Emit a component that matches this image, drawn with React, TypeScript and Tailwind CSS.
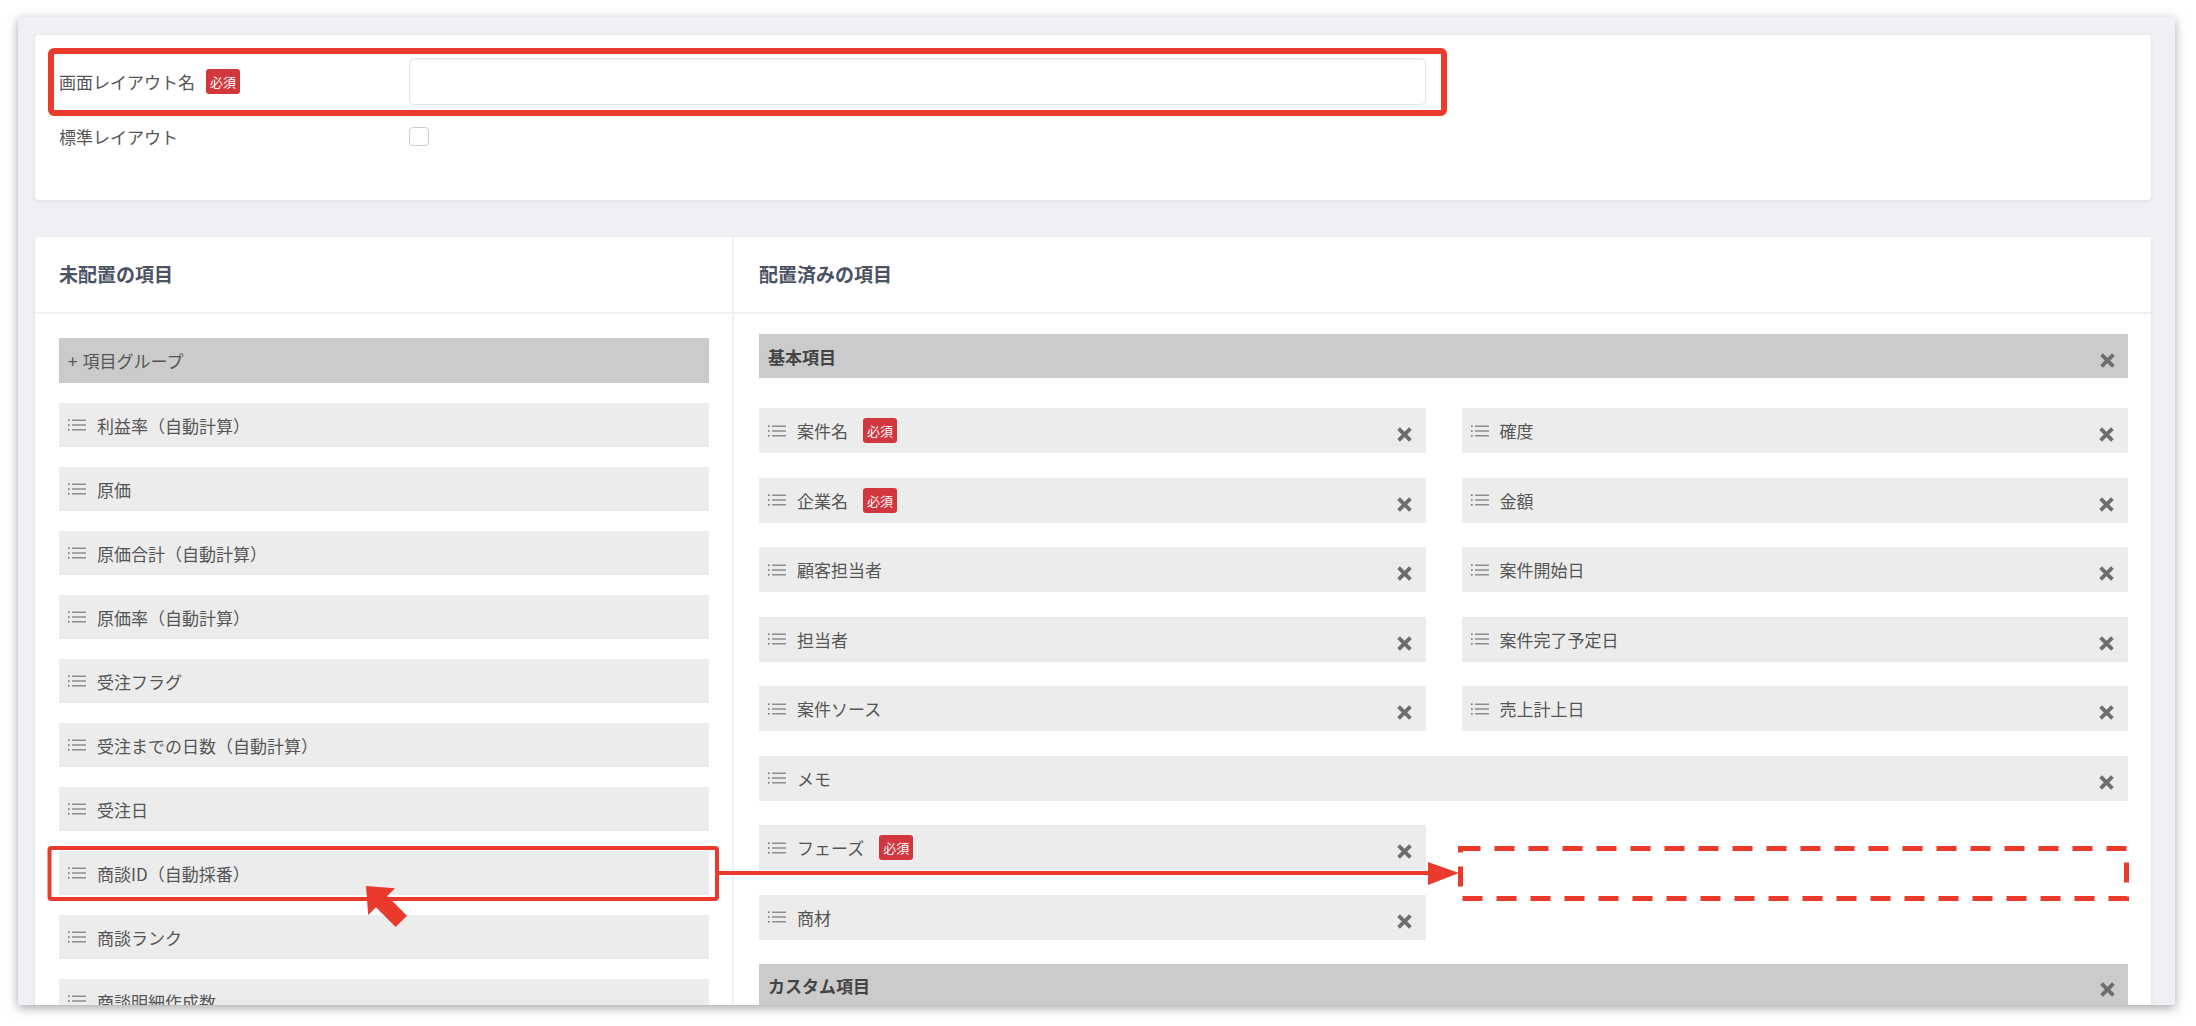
import React from "react"

const RED = "#ea3a2b"

function ListIcon() {
  return (
    <svg width="18" height="12" viewBox="0 0 18 12" className="shrink-0">
      <g fill="#777">
        <rect x="0" y="0.4" width="1.6" height="1.6" />
        <rect x="0" y="5.2" width="1.6" height="1.6" />
        <rect x="0" y="10" width="1.6" height="1.6" />
      </g>
      <g stroke="#777" strokeWidth="1.2">
        <line x1="4" y1="1.2" x2="18" y2="1.2" />
        <line x1="4" y1="6" x2="18" y2="6" />
        <line x1="4" y1="10.8" x2="18" y2="10.8" />
      </g>
    </svg>
  )
}

function XIcon({ className = "" }: { className?: string }) {
  return (
    <svg width="15" height="15" viewBox="0 0 15 15" className={"shrink-0 " + className}>
      <g stroke="#6e6e6e" strokeWidth="3.8" strokeLinecap="butt">
        <line x1="1.6" y1="1.6" x2="13.4" y2="13.4" />
        <line x1="13.4" y1="1.6" x2="1.6" y2="13.4" />
      </g>
    </svg>
  )
}

function Required() {
  return (
    <span className="inline-flex items-center justify-center h-[25px] w-[34px] rounded-[3px] bg-[#d2373d] text-white text-[13px] leading-none">
      必須
    </span>
  )
}

function Item({ label, req, removable = true, h = "h-[45px]" }: { label: string; req?: boolean; removable?: boolean; h?: string }) {
  return (
    <div className={h + " bg-[#ececec] flex items-center pl-[9px] pr-[14px]"}>
      <ListIcon />
      <span className="ml-[11px] text-[17px] text-[#555] leading-none">{label}</span>
      {req && (
        <span className="ml-[15px] flex">
          <Required />
        </span>
      )}
      {removable && <XIcon className="ml-auto mt-[8px]" />}
    </div>
  )
}

function GroupBar({ label }: { label: string }) {
  return (
    <div className="h-[44px] bg-[#cbcbcb] flex items-center pl-[9px] pr-[13px]">
      <span className="text-[17px] font-bold text-[#444] leading-none">{label}</span>
      <XIcon className="ml-auto mt-[8px]" />
    </div>
  )
}

const unplaced = [
  "利益率（自動計算）",
  "原価",
  "原価合計（自動計算）",
  "原価率（自動計算）",
  "受注フラグ",
  "受注までの日数（自動計算）",
  "受注日",
  "商談ID（自動採番）",
  "商談ランク",
  "商談明細作成数",
]

export default function App() {
  return (
    <div className="relative w-[2196px] h-[1026px] bg-white overflow-hidden pt-[17px] pl-[18px] pr-[21px] pb-[21px] [font-family:'Noto_Sans_CJK_JP','Noto_Sans',sans-serif]">
      <div className="h-full bg-[#eff0f3] overflow-hidden pt-[18px] pl-[17px] pr-[24px] shadow-[0_3px_10px_rgba(0,0,0,0.35)]">
        {/* layout name card */}
        <div className="h-[165px] bg-white rounded-[4px] shadow-[0_1px_4px_rgba(0,0,0,0.08)] pt-[23px] pl-[24px]">
          <div className="flex items-center h-[47px]">
            <div className="w-[350px] flex items-center">
              <span className="text-[17px] text-[#555] leading-none">画面レイアウト名</span>
              <span className="ml-[11px] flex">
                <Required />
              </span>
            </div>
            <div className="w-[1017px] h-[47px] rounded-[5px] border border-[#e2e4e8] bg-white shadow-[inset_0_1px_2px_rgba(0,0,0,0.05)]" />
          </div>
          <div className="flex items-center h-[30px] mt-[16px]">
            <span className="w-[350px] text-[17px] text-[#555] leading-none">標準レイアウト</span>
            <div className="w-[20px] h-[19px] rounded-[4px] border border-[#c9ccd1] bg-white" />
          </div>
        </div>

        {/* items card */}
        <div className="mt-[37px] bg-white rounded-t-[4px] shadow-[0_1px_4px_rgba(0,0,0,0.08)] flex">
          <div className="w-[699px] border-r-2 border-[#eef0f2]">
            <div className="h-[77px] border-b-2 border-[#eef0f2] flex items-center pl-[24px]">
              <span className="text-[19px] font-bold text-[#4a5263]">未配置の項目</span>
            </div>
            <div className="pt-[24px] pl-[24px] pr-[23px] flex flex-col gap-[20px] pb-[40px]">
              <div className="h-[45px] bg-[#cbcbcb] flex items-center pl-[9px]">
                <span className="text-[17px] text-[#555] leading-none mr-[5px]">+</span>
                <span className="text-[17px] text-[#555] leading-none">項目グループ</span>
              </div>
              {unplaced.map((l) => (
                <Item key={l} label={l} removable={false} h="h-[44px]" />
              ))}
            </div>
          </div>
          <div className="flex-1">
            <div className="h-[77px] border-b-2 border-[#eef0f2] flex items-center pl-[25px]">
              <span className="text-[19px] font-bold text-[#4a5263]">配置済みの項目</span>
            </div>
            <div className="pt-[20px] pl-[25px] pr-[23px] pb-[40px]">
              <GroupBar label="基本項目" />
              <div className="grid grid-cols-2 gap-x-[36px] gap-y-[24.5px] mt-[30px]">
                <Item label="案件名" req />
                <Item label="確度" />
                <Item label="企業名" req />
                <Item label="金額" />
                <Item label="顧客担当者" />
                <Item label="案件開始日" />
                <Item label="担当者" />
                <Item label="案件完了予定日" />
                <Item label="案件ソース" />
                <Item label="売上計上日" />
                <div className="col-span-2">
                  <Item label="メモ" />
                </div>
                <Item label="フェーズ" req />
                <div />
                <Item label="商材" />
                <div />
              </div>
              <div className="mt-[24px]">
                <GroupBar label="カスタム項目" />
              </div>
            </div>
          </div>
        </div>
      </div>

      {/* red annotations */}
      <svg className="absolute inset-0 pointer-events-none" width="2196" height="1026" viewBox="0 0 2196 1026">
        <rect x="51" y="51" width="1393" height="62" rx="3" fill="none" stroke={RED} strokeWidth="6" />
        <rect x="49.5" y="848" width="667.5" height="51" rx="2" fill="none" stroke={RED} strokeWidth="4" />
        <line x1="719" y1="873" x2="1432" y2="873" stroke={RED} strokeWidth="4" />
        <polygon points="1428,862 1459,873 1428,885" fill={RED} />
        <rect x="1460.5" y="848.5" width="666" height="50" fill="none" stroke={RED} strokeWidth="5" strokeDasharray="20 14" />
        <polygon
          points="366,886 395,888.2 387.2,896 407,915.7 395.7,927 376,907.3 368.2,915"
          fill={RED}
        />
      </svg>
    </div>
  )
}
